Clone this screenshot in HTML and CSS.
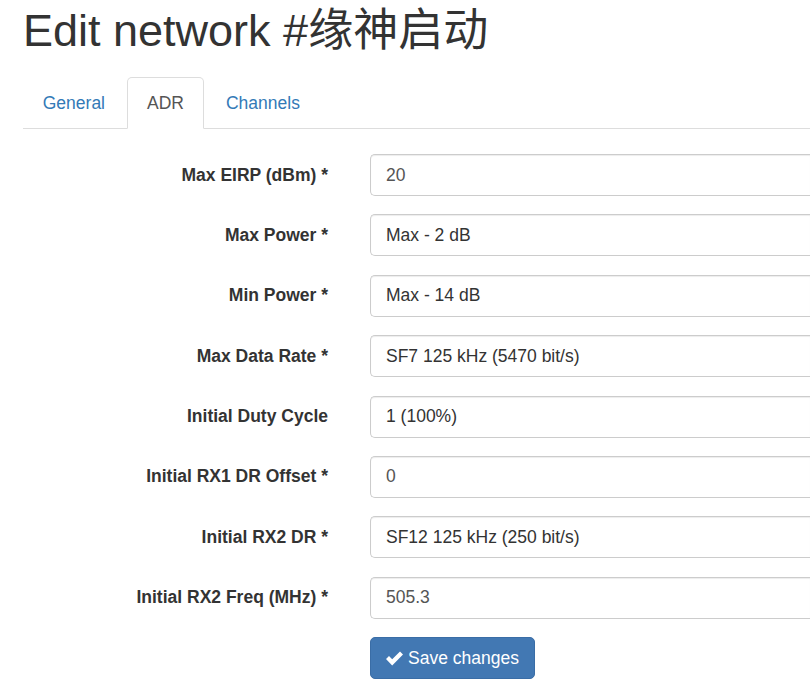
FILE: index.html
```html
<!DOCTYPE html>
<html lang="en">
<head>
<meta charset="utf-8">
<title>Edit network</title>
<link rel="stylesheet" href="styles.css">
</head>
<body>
<div class="page">
  <h1 class="title">Edit network #缘神启动</h1>
  <ul class="tabs">
    <li class="tab"><a href="#">General</a></li>
    <li class="tab active"><a href="#">ADR</a></li>
    <li class="tab"><a href="#">Channels</a></li>
  </ul>
  <form class="form">
    <div class="group"><label class="label">Max EIRP (dBm) *</label><div class="control">20</div></div>
    <div class="group"><label class="label">Max Power *</label><div class="control dark">Max - 2 dB</div></div>
    <div class="group"><label class="label">Min Power *</label><div class="control dark">Max - 14 dB</div></div>
    <div class="group"><label class="label">Max Data Rate *</label><div class="control dark">SF7 125 kHz (5470 bit/s)</div></div>
    <div class="group"><label class="label">Initial Duty Cycle</label><div class="control dark">1 (100%)</div></div>
    <div class="group"><label class="label">Initial RX1 DR Offset *</label><div class="control">0</div></div>
    <div class="group"><label class="label">Initial RX2 DR *</label><div class="control dark">SF12 125 kHz (250 bit/s)</div></div>
    <div class="group"><label class="label">Initial RX2 Freq (MHz) *</label><div class="control">505.3</div></div>
    <div class="group actions">
      <span></span>
      <div><button type="button" class="btn"><svg class="check" viewBox="0 0 17 15" width="17" height="15"><polygon points="0,8 3,5 6.2,8.2 14,0.4 17,3.4 6.2,14.4" fill="#fff"/></svg> Save changes</button></div>
    </div>
  </form>
</div>
<div class="footer"></div>
</body>
</html>
```

FILE: styles.css
```css
html, body {
  margin: 0;
  padding: 0;
  overflow: hidden;
  background: #fff;
}
body {
  font-family: "Liberation Sans", Arial, "Noto Sans CJK SC", sans-serif;
  font-size: 17.5px;
  line-height: 25px;
  color: #333;
  height: 700px;
}
.page {
  width: 810px;
  box-sizing: border-box;
  padding-left: 23px;
  height: 697px;
}
.title {
  font-size: 45px;
  font-weight: 400;
  line-height: 1.1;
  margin: 6px 0 21.5px;
  color: #333;
}
.tabs {
  list-style: none;
  margin: 0;
  padding: 0;
  display: flex;
  border-bottom: 1px solid #ddd;
}
.tab {
  margin-bottom: -1px;
  margin-right: 2.5px;
}
.tab a {
  display: block;
  padding: 12.5px 18.75px;
  line-height: 25px;
  border: 1px solid transparent;
  border-radius: 5px 5px 0 0;
  color: #337ab7;
  text-decoration: none;
}
.tab.active a {
  color: #555;
  background: #fff;
  border-color: #ddd #ddd transparent;
}
.form {
  padding-top: 25px;
}
.group {
  display: grid;
  grid-template-columns: 305px 1fr;
  column-gap: 42px;
  margin-bottom: 18.4px;
}
.label {
  font-weight: bold;
  text-align: right;
  padding-top: 8.5px;
  line-height: 25px;
}
.control {
  height: 42px;
  box-sizing: border-box;
  border: 1px solid #ccc;
  border-right: 0;
  border-radius: 5px 0 0 5px;
  padding: 7.5px 15px;
  line-height: 25px;
  color: #555;
  box-shadow: inset 0 1px 1px rgba(0,0,0,.075);
}
.control.dark {
  color: #333;
}
.actions {
  margin-top: 2.4px;
}
.btn {
  font-family: inherit;
  font-size: 17.5px;
  line-height: 25px;
  height: 42px;
  box-sizing: border-box;
  padding: 7.5px 15px;
  color: #fff;
  background: #4278b3;
  border: 1px solid #3a6da6;
  border-radius: 5px;
  display: inline-flex;
  align-items: center;
  gap: 5px;
  width: 165px;
}
.check {
  display: block;
  margin-top: 0;
}
.footer {
  height: 3px;
  background: #f5f5f5;
}
```
